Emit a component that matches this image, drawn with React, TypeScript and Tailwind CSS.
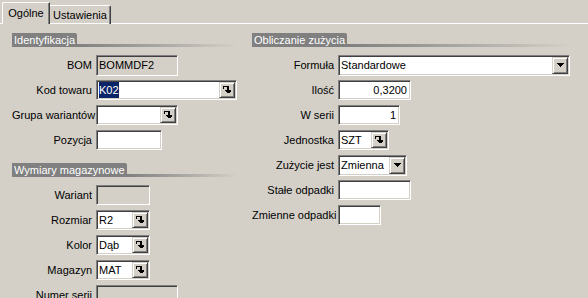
import React from "react";

const sunken =
  "border border-t-[#808080] border-l-[#808080] border-r-white border-b-white shadow-[inset_1px_1px_0_#404040,inset_-1px_-1px_0_#d4d0c8]";
const raised =
  "border border-t-[#d4d0c8] border-l-[#d4d0c8] border-r-[#404040] border-b-[#404040] shadow-[inset_1px_1px_0_#ffffff,inset_-1px_-1px_0_#808080]";

function LookupIcon() {
  return (
    <svg width="8" height="8" viewBox="0 0 8 8" shapeRendering="crispEdges">
      <rect x="0" y="0" width="1" height="3" fill="#000" />
      <rect x="0" y="0" width="5" height="1" fill="#000" />
      <rect x="4" y="0" width="1" height="5" fill="#000" />
      <rect x="5" y="0" width="1" height="5" fill="#000" />
      <rect x="2" y="4" width="7" height="1" fill="#000" />
      <rect x="3" y="5" width="5" height="1" fill="#000" />
      <rect x="4" y="6" width="3" height="1" fill="#000" />
    </svg>
  );
}

function ArrowIcon() {
  return (
    <svg width="7" height="4" viewBox="0 0 7 4" shapeRendering="crispEdges">
      <rect x="0" y="0" width="7" height="1" fill="#000" />
      <rect x="1" y="1" width="5" height="1" fill="#000" />
      <rect x="2" y="2" width="3" height="1" fill="#000" />
      <rect x="3" y="3" width="1" height="1" fill="#000" />
    </svg>
  );
}

type FieldProps = {
  w: number;
  value?: React.ReactNode;
  disabled?: boolean;
  right?: boolean;
  button?: "lookup" | "combo";
  h?: number;
};

function Field({ w, value, disabled, right, button, h = 20 }: FieldProps) {
  return (
    <div
      className={`${sunken} flex items-stretch p-[1px] ${disabled ? "bg-[#d4d0c8]" : "bg-white"}`}
      style={{ width: w, height: h }}
    >
      <div
        className={`flex-1 flex items-center px-[1px] overflow-hidden whitespace-nowrap ${right ? "justify-end pr-[2px]" : ""}`}
      >
        {value}
      </div>
      {button === "lookup" && (
        <div className={`${raised} w-[16px] bg-[#d4d0c8] flex items-center justify-center`}>
          <LookupIcon />
        </div>
      )}
      {button === "combo" && (
        <div className={`${raised} w-[16px] bg-[#d4d0c8] flex items-center justify-center`}>
          <ArrowIcon />
        </div>
      )}
    </div>
  );
}

function Row({ label, labelW, children }: { label: string; labelW: number; children: React.ReactNode }) {
  return (
    <div className="flex items-center gap-[4px] h-[20px]">
      <div className="text-right whitespace-nowrap" style={{ width: labelW }}>
        {label}
      </div>
      {children}
    </div>
  );
}

function Header({ title }: { title: string }) {
  return (
    <div className="flex items-end h-[14px]">
      <div className="bg-[#808080] text-white h-[14px] leading-[14px] px-[2px] rounded-tr-[2px] whitespace-nowrap">
        {title}
      </div>
      <div className="flex-1 h-[3px] bg-gradient-to-r from-[#808080] to-[#d4d0c8]" />
    </div>
  );
}

export default function App() {
  return (
    <div className="w-[588px] h-[298px] overflow-hidden bg-[#d4d0c8] text-black text-[11px] font-['Liberation_Sans',Arial,sans-serif]">
      {/* Tabs */}
      <div className="flex items-end h-[24px] pl-[2px]">
        <div className="relative z-10 h-[22px] w-[48px] border-l border-t border-white border-r border-r-[#404040] shadow-[inset_-1px_0_0_#808080] bg-[#d4d0c8] flex items-center justify-center pb-[1px] rounded-tl-[2px]">
          Ogólne
        </div>
        <div className="h-[19px] w-[61px] border-t border-white border-r border-r-[#404040] shadow-[inset_-1px_0_0_#808080] flex items-center justify-center rounded-tr-[2px]">
          Ustawienia
        </div>
      </div>
      {/* Panel */}
      <div className="-mt-px border-t border-white flex pt-[9px]">
        {/* Left column */}
        <div className="ml-[12px] w-[226px] flex flex-col">
          <Header title="Identyfikacja" />
          <div className="flex flex-col gap-[5px] mt-[8px]">
            <Row label="BOM" labelW={80}>
              <Field w={82} h={21} disabled value="BOMMDF2" />
            </Row>
            <Row label="Kod towaru" labelW={80}>
              <Field
                w={141}
                button="lookup"
                value={<span className="bg-[#0a246a] text-white leading-[16px] h-[16px] px-[0px]">K02</span>}
              />
            </Row>
            <Row label="Grupa wariantów" labelW={80}>
              <Field w={82} button="lookup" />
            </Row>
            <Row label="Pozycja" labelW={80}>
              <Field w={66} />
            </Row>
          </div>
          <div className="mt-[13px]">
            <Header title="Wymiary magazynowe" />
          </div>
          <div className="flex flex-col gap-[5px] mt-[8px]">
            <Row label="Wariant" labelW={80}>
              <Field w={54} disabled />
            </Row>
            <Row label="Rozmiar" labelW={80}>
              <Field w={54} button="lookup" value="R2" />
            </Row>
            <Row label="Kolor" labelW={80}>
              <Field w={54} button="lookup" value="Dąb" />
            </Row>
            <Row label="Magazyn" labelW={80}>
              <Field w={54} button="lookup" value="MAT" />
            </Row>
            <Row label="Numer serii" labelW={80}>
              <Field w={82} disabled />
            </Row>
          </div>
        </div>
        {/* Right column */}
        <div className="ml-[14px] w-[320px] flex flex-col">
          <Header title="Obliczanie zużycia" />
          <div className="flex flex-col gap-[5px] mt-[8px]">
            <Row label="Formuła" labelW={82}>
              <Field w={232} h={21} button="combo" value="Standardowe" />
            </Row>
            <Row label="Ilość" labelW={82}>
              <Field w={73} right value="0,3200" />
            </Row>
            <Row label="W serii" labelW={82}>
              <Field w={62} right value="1" />
            </Row>
            <Row label="Jednostka" labelW={82}>
              <Field w={51} button="lookup" value="SZT" />
            </Row>
            <Row label="Zużycie jest" labelW={82}>
              <Field w={69} h={21} button="combo" value="Zmienna" />
            </Row>
            <Row label="Stałe odpadki" labelW={82}>
              <Field w={73} />
            </Row>
            <Row label="Zmienne odpadki" labelW={82}>
              <Field w={43} />
            </Row>
          </div>
        </div>
      </div>
    </div>
  );
}
